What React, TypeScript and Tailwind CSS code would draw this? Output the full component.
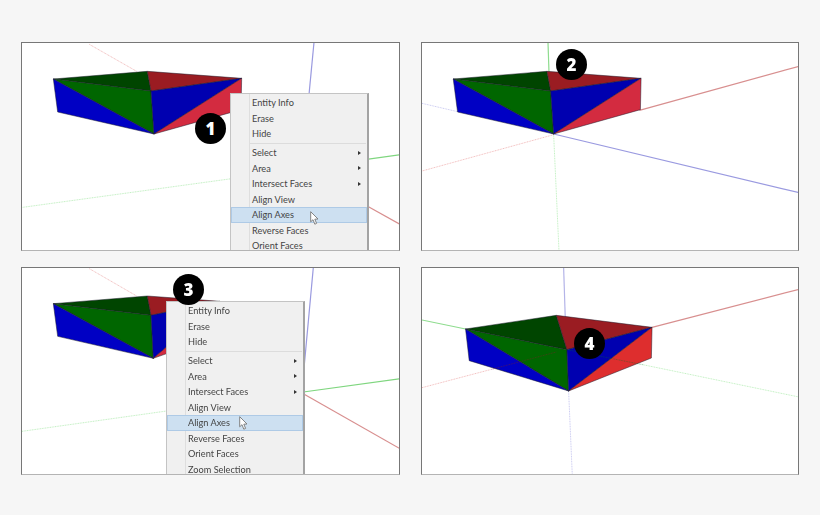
import { ReactNode } from 'react';

type Pt = [number, number];

interface Box {
  a: Pt;
  b: Pt;
  c: Pt;
  d: Pt;
  e: Pt;
  f: Pt;
  g: Pt;
}

interface Axis {
  from: Pt;
  to: Pt;
  color: string;
  dotted?: boolean;
}

const menuRows = [
  { label: 'Entity Info' },
  { label: 'Erase' },
  { label: 'Hide', gap: true },
  { label: 'Select', sub: true },
  { label: 'Area', sub: true },
  { label: 'Intersect Faces', sub: true },
  { label: 'Align View' },
  { label: 'Align Axes', active: true },
  { label: 'Reverse Faces' },
  { label: 'Orient Faces' },
  { label: 'Zoom Selection' },
];

const RED = '#d88f8f';
const BLUE = '#9a9ae0';
const GREEN = '#8edc8e';
const PALE_RED = '#f2bebe';
const PALE_BLUE = '#cbcbf1';
const PALE_GREEN = '#c2f0c2';

const pts = (list: Pt[]) => list.map(p => p.join(',')).join(' ');

function Scene({ viewBox, box, axes, over = [], redSide = '#d32b40' }: { viewBox: string; box: Box; axes: Axis[]; over?: Axis[]; redSide?: string }) {
  const { a, b, c, d, e, f, g } = box;
  const faces: { points: Pt[]; fill: string }[] = [
    { points: [a, b, e], fill: '#004500' },
    { points: [b, c, e], fill: '#9a1c22' },
    { points: [a, e, d], fill: '#006600' },
    { points: [a, d, f], fill: '#0000c4' },
    { points: [e, c, d], fill: '#0000b0' },
    { points: [c, g, d], fill: redSide },
  ];
  const drawLine = (axis: Axis, key: string) => (
    <line
      key={key}
      x1={axis.from[0]}
      y1={axis.from[1]}
      x2={axis.to[0]}
      y2={axis.to[1]}
      stroke={axis.color}
      strokeWidth={axis.dotted ? 3 : 3.6}
      strokeDasharray={axis.dotted ? '3 2' : undefined}
    />
  );
  return (
    <svg className="block w-full h-full" viewBox={viewBox} preserveAspectRatio="none">
      {axes.map((axis, i) => drawLine(axis, `axis-${i}`))}
      {faces.map((face, i) => (
        <polygon key={i} points={pts(face.points)} fill={face.fill} stroke="#1c1c2c" strokeWidth={1.5} strokeLinejoin="round" />
      ))}
      {over.map((axis, i) => drawLine(axis, `over-${i}`))}
    </svg>
  );
}

function ContextMenu({ className }: { className: string }) {
  return (
    <div className={`absolute w-[139px] pt-[1px] bg-[#f0f0f0] border-t border-l border-[#c4c4c4] border-r-2 border-r-[#a3a3a3] text-[9.2px] leading-[15.55px] text-[#444] font-['Lato',sans-serif] ${className}`}>
      <div className="absolute left-[18px] top-0 bottom-0 w-px bg-[#dedede]" />
      {menuRows.map(row => (
        <div key={row.label}>
          <div
            className={`relative flex items-center justify-between h-[15.55px] pl-[21px] pr-[6px] whitespace-nowrap ${row.active ? 'bg-[#cde0f1] outline outline-[#aecae6] -outline-offset-1' : ''}`}
          >
            {row.label}
            {row.sub && (
              <span className="w-0 h-0 border-y-[2.5px] border-y-transparent border-l-[3.5px] border-l-[#333]" />
            )}
          </div>
          {row.gap && (
            <div className="h-[3.5px] flex items-center pl-[19px] pr-px">
              <div className="h-px w-full bg-[#dcdcdc]" />
            </div>
          )}
        </div>
      ))}
    </div>
  );
}

function Badge({ n, className }: { n: number; className: string }) {
  return (
    <div className={`absolute w-[31px] h-[31px] rounded-full bg-black text-white flex items-center justify-center text-[17px] font-extrabold font-['Open_Sans',sans-serif] ${className}`}>
      {n}
    </div>
  );
}

function Cursor({ className }: { className: string }) {
  return (
    <svg className={`absolute w-[10px] h-[15px] ${className}`} viewBox="0 0 10 15">
      <path d="M0.7 0.7 L0.7 10.8 L3 8.7 L4.8 13.2 L6.6 12.4 L4.8 8.2 L8 8 Z" fill="#fff" stroke="#777" strokeWidth={0.9} strokeLinejoin="round" />
    </svg>
  );
}

function Panel({ children }: { children: ReactNode }) {
  return (
    <div className="relative overflow-hidden bg-white border border-[#777] border-b-[#b4b4b4]">
      {children}
    </div>
  );
}

const box12: Box = { a: [130, 148], b: [412, 125], c: [695, 146], d: [432, 313], e: [423, 184], f: [143, 247], g: [693, 240] };
const box3: Box = { a: [130, 145], b: [412, 122], c: [630, 138], d: [430, 309], e: [423, 180], f: [143, 243], g: [625, 240] };
const box4: Box = { a: [167, 221], b: [440, 180], c: [728, 216], d: [477, 407], e: [472, 283], f: [178, 316], g: [726, 308] };

const axes1: Axis[] = [
  { from: [238, 44], to: [380, 125], color: PALE_RED, dotted: true },
  { from: [912, 38], to: [897, 195], color: BLUE },
  { from: [1070, 389], to: [1170, 375], color: '#7fd67f' },
  { from: [1070, 528], to: [1170, 584], color: RED },
  { from: [38, 533], to: [665, 447], color: PALE_GREEN, dotted: true },
];

const axes2: Axis[] = [
  { from: [415, 38], to: [418, 128], color: GREEN },
  { from: [690, 242], to: [1170, 110], color: RED },
  { from: [36, 221], to: [143, 246], color: PALE_BLUE, dotted: true },
  { from: [432, 313], to: [1170, 489], color: BLUE },
  { from: [432, 315], to: [36, 424], color: PALE_RED, dotted: true },
  { from: [432, 315], to: [448, 662], color: PALE_GREEN, dotted: true },
];

const axes3: Axis[] = [
  { from: [238, 40], to: [380, 122], color: PALE_RED, dotted: true },
  { from: [910, 36], to: [880, 360], color: BLUE },
  { from: [880, 410], to: [1170, 370], color: '#7fd67f' },
  { from: [880, 415], to: [1170, 580], color: RED },
  { from: [36, 528], to: [470, 467], color: PALE_GREEN, dotted: true },
];

const axes4: Axis[] = [
  { from: [462, 36], to: [470, 283], color: '#b4b4e8' },
  { from: [36, 194], to: [167, 221], color: GREEN },
  { from: [728, 216], to: [1170, 102], color: RED },
  { from: [36, 397], to: [245, 342], color: PALE_RED, dotted: true },
  { from: [700, 328], to: [1170, 425], color: PALE_GREEN, dotted: true },
  { from: [477, 407], to: [488, 658], color: PALE_BLUE, dotted: true },
];

const over4: Axis[] = [
  { from: [245, 342], to: [440, 290], color: 'rgba(120,30,40,0.5)', dotted: true },
  { from: [472, 283], to: [700, 328], color: 'rgba(0,110,40,0.4)', dotted: true },
];

export default function App() {
  return (
    <div className="w-[820px] h-[515px] bg-[#f6f6f6] pl-[21px] pt-[42px]">
      <div className="grid grid-cols-[379px_378px] grid-rows-[209px_208px] gap-x-[21px] gap-y-[16px] blur-[0.35px]">
        <Panel>
          <Scene viewBox="36 40 1131 621" box={box12} axes={axes1} />
          <ContextMenu className="left-[208px] top-[50px]" />
          <Badge n={1} className="left-[173px] top-[70px]" />
          <Cursor className="left-[288px] top-[168px]" />
        </Panel>
        <Panel>
          <Scene viewBox="36 40 1131 621" box={box12} axes={axes2} />
          <Badge n={2} className="left-[134px] top-[6px]" />
        </Panel>
        <Panel>
          <Scene viewBox="36 38 1131 618" box={box3} axes={axes3} />
          <ContextMenu className="left-[144px] top-[33px]" />
          <Badge n={3} className="left-[151px] top-[6px]" />
          <Cursor className="left-[217px] top-[148px]" />
        </Panel>
        <Panel>
          <Scene viewBox="36 38 1131 618" box={box4} axes={axes4} over={over4} redSide="#de2e2e" />
          <Badge n={4} className="left-[152px] top-[60px]" />
        </Panel>
      </div>
    </div>
  );
}
